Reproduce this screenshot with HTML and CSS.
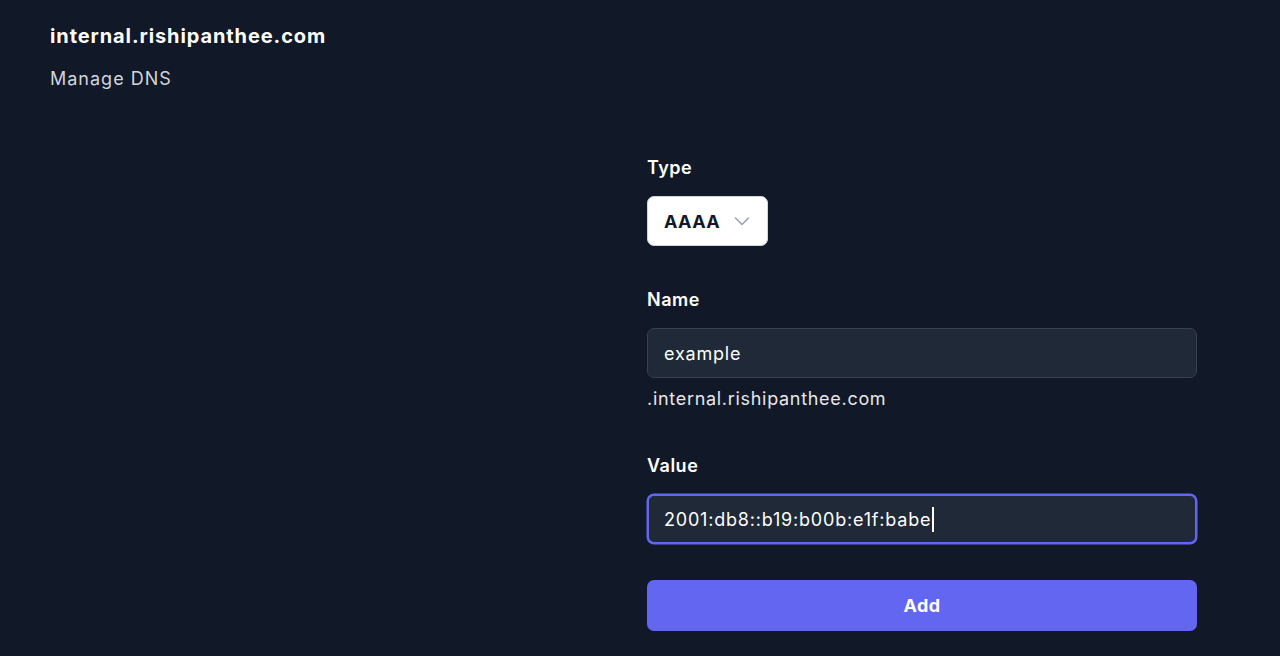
FILE: index.html
```html
<!DOCTYPE html>
<html>
<head>
<meta charset="utf-8">
<link rel="stylesheet" href="styles.css">
</head>
<body>
<header class="header">
  <h1 class="title">internal.rishipanthee.com</h1>
  <p class="subtitle">Manage DNS</p>
</header>
<main class="layout">
  <div class="spacer"></div>
  <form class="form">
    <div class="field field-type">
      <label class="label">Type</label>
      <div class="select">
        <span class="select-value">AAAA</span>
        <svg class="chevron" width="16" height="10" viewBox="0 0 16 10" fill="none" stroke="#9ca3af" stroke-width="1.6" stroke-linecap="round" stroke-linejoin="round"><path d="M1.5 2l6.5 6.5 6.5-6.5"/></svg>
      </div>
    </div>
    <div class="field field-name">
      <label class="label">Name</label>
      <div class="input">example</div>
      <div class="suffix">.internal.rishipanthee.com</div>
    </div>
    <div class="field field-value">
      <label class="label">Value</label>
      <div class="input input-focus">2001:db8::b19:b00b:e1f:babe<span class="caret"></span></div>
    </div>
    <button type="button" class="button">Add</button>
  </form>
</main>
</body>
</html>
```

FILE: styles.css
```css
* { box-sizing: border-box; }
html, body {
  margin: 0;
  padding: 0;
  background: #111827;
  height: 100%;
}
body {
  font-family: Inter, "Noto Sans", sans-serif;
  color: #ffffff;
  overflow: hidden;
  letter-spacing: 0.8px;
}
.header {
  padding: 22px 50px 0;
}
.title {
  margin: 0;
  font-size: 20px;
  line-height: 28px;
  font-weight: 700;
  color: #ffffff;
  letter-spacing: 0.9px;
}
.subtitle {
  margin: 15px 0 0;
  font-size: 18px;
  line-height: 28px;
  color: #d1d5db;
  letter-spacing: 1px;
}
.layout {
  display: grid;
  grid-template-columns: 597px 550px;
  padding: 61px 50px 0;
}
.form {
  display: flex;
  flex-direction: column;
}
.field {
  display: flex;
  flex-direction: column;
  align-items: flex-start;
}
.label {
  font-size: 18px;
  line-height: 28px;
  font-weight: 600;
  color: #ffffff;
  margin-bottom: 14px;
  letter-spacing: 0.5px;
}
.select {
  width: 121px;
  height: 50px;
  background: #ffffff;
  border: 1px solid #d1d5db;
  border-radius: 7px;
  display: flex;
  align-items: center;
  padding: 0 17px 0 16px;
  justify-content: space-between;
}
.select-value {
  color: #111827;
  font-size: 18px;
  font-weight: 700;
  letter-spacing: 0.4px;
}
.chevron { display: block; }
.input {
  width: 100%;
  height: 50px;
  background: #1f2937;
  border: 1px solid #374151;
  border-radius: 7px;
  display: flex;
  align-items: center;
  padding: 0 16px;
  font-size: 18px;
  color: #ffffff;
}
.input-focus {
  border: 2px solid #6366f1;
  box-shadow: 0 0 0 0.5px #6366f1;
  padding: 0 15px;
}
.caret {
  display: inline-block;
  width: 1.5px;
  height: 25px;
  background: #ffffff;
  margin-left: 1px;
}
.suffix {
  margin-top: 7px;
  font-size: 18px;
  line-height: 28px;
  color: #e5e7eb;
  letter-spacing: 0.7px;
}
.field-type { margin-bottom: 40px; }
.field-name { margin-bottom: 39px; }
.field-value { margin-bottom: 36px; }
.button {
  width: 100%;
  height: 51px;
  border: none;
  border-radius: 7px;
  background: #6366f1;
  color: #ffffff;
  font-family: inherit;
  font-size: 18px;
  font-weight: 700;
  letter-spacing: 0.5px;
}
```
